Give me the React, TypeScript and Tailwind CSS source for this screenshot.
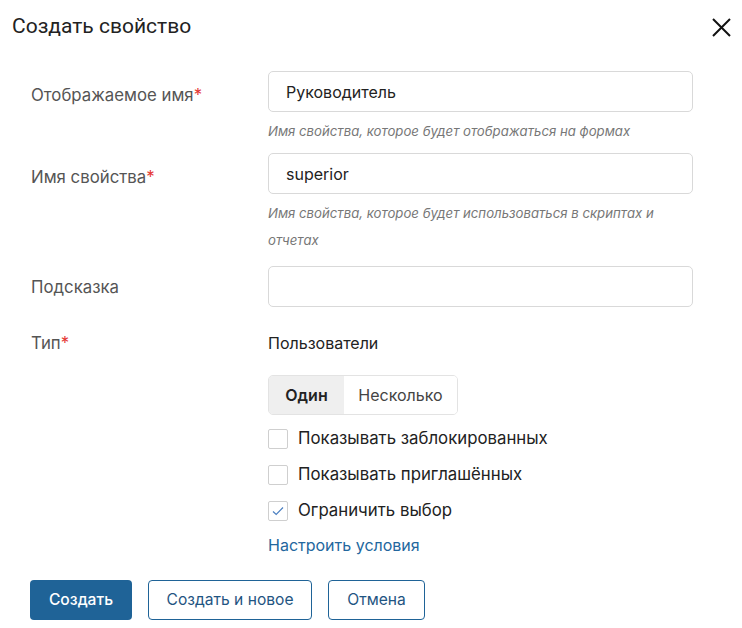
import { useState } from "react";

const font = { fontFamily: "Inter, 'Noto Sans', sans-serif" };

function Label({ text, required }: { text: string; required?: boolean }) {
  return (
    <div className="w-[237px] shrink-0 text-[16.8px] text-[#555] leading-[24px]">
      {text}
      {required && <span className="text-[#e53935]">*</span>}
    </div>
  );
}

function Field({ value }: { value: string }) {
  return (
    <div className="h-[41px] w-[425px] rounded-[5px] border border-[#d9d9d9] px-[17px] flex items-center text-[16px] text-[#222]">
      {value}
    </div>
  );
}

function Hint({ children }: { children: React.ReactNode }) {
  return <div className="mt-[6px] w-[425px] text-[13.2px] italic text-[#777] leading-[27px]">{children}</div>;
}

function Checkbox({ label, checked }: { label: string; checked?: boolean }) {
  return (
    <div className="flex items-center h-[36px]">
      <span className="w-[20px] h-[20px] border border-[#cfcfcf] rounded-[2px] flex items-center justify-center">
        {checked && (
          <svg width="12" height="10" viewBox="0 0 12 10" fill="none">
            <path d="M1 5.5 L4.2 8.5 L11 1.5" stroke="#4a7fc1" strokeWidth="1.2" />
          </svg>
        )}
      </span>
      <span className="ml-[10px] text-[16.8px] text-[#222]">{label}</span>
    </div>
  );
}

export default function App() {
  const [mode, setMode] = useState("one");
  return (
    <div className="w-[742px] h-[628px] bg-white relative" style={font}>
      <div className="flex items-center justify-between h-[54px] pl-[12px] pr-[10px]">
        <h1 className="text-[21px] text-[#222]" style={{ fontFamily: "Roboto, sans-serif" }}>
          Создать свойство
        </h1>
        <button className="w-[22px] h-[22px] flex items-center justify-center">
          <svg width="19" height="19" viewBox="0 0 19 19">
            <path d="M1 1 L18 18 M18 1 L1 18" stroke="#111" strokeWidth="2" />
          </svg>
        </button>
      </div>

      <div className="pl-[31px] pt-[17px]">
        <div className="flex">
          <div className="pt-[12px]"><Label text="Отображаемое имя" required /></div>
          <div>
            <Field value="Руководитель" />
            <Hint>Имя свойства, которое будет отображаться на формах</Hint>
          </div>
        </div>
        <div className="flex mt-[8px]">
          <div className="pt-[12px]"><Label text="Имя свойства" required /></div>
          <div>
            <Field value="superior" />
            <Hint>Имя свойства, которое будет использоваться в скриптах и отчетах</Hint>
          </div>
        </div>
        <div className="flex mt-[12px]">
          <div className="pt-[9px]"><Label text="Подсказка" /></div>
          <Field value="" />
        </div>
        <div className="flex mt-[24px]">
          <Label text="Тип" required />
          <div>
            <div className="text-[16px] text-[#222] leading-[24px]">Пользователи</div>
            <div className="mt-[20px] inline-flex h-[40px] rounded-[5px] border border-[#e3e3e3] overflow-hidden text-[16px]">
              <button
                onClick={() => setMode("one")}
                className={`w-[75px] font-semibold text-[#222] ${mode === "one" ? "bg-[#efefef]" : "bg-white"}`}
              >
                Один
              </button>
              <button
                onClick={() => setMode("many")}
                className={`w-[113px] text-[#444] ${mode === "many" ? "bg-[#efefef]" : "bg-white"}`}
              >
                Несколько
              </button>
            </div>
            <div className="mt-[6px]">
              <Checkbox label="Показывать заблокированных" />
              <Checkbox label="Показывать приглашённых" />
              <Checkbox label="Ограничить выбор" checked />
            </div>
            <div className="mt-[-3px] text-[16px] text-[#23679e] leading-[38px]">Настроить условия</div>
          </div>
        </div>
      </div>

      <div className="absolute left-[30px] top-[580px] flex gap-[16px] text-[15.6px]">
        <button className="h-[40px] w-[102px] rounded-[4px] bg-[#1f6397] text-white font-medium">Создать</button>
        <button className="h-[40px] w-[164px] rounded-[4px] border border-[#1f6397] text-[#1f5582]">Создать и новое</button>
        <button className="h-[40px] w-[97px] rounded-[4px] border border-[#1f6397] text-[#1f5582]">Отмена</button>
      </div>
    </div>
  );
}
